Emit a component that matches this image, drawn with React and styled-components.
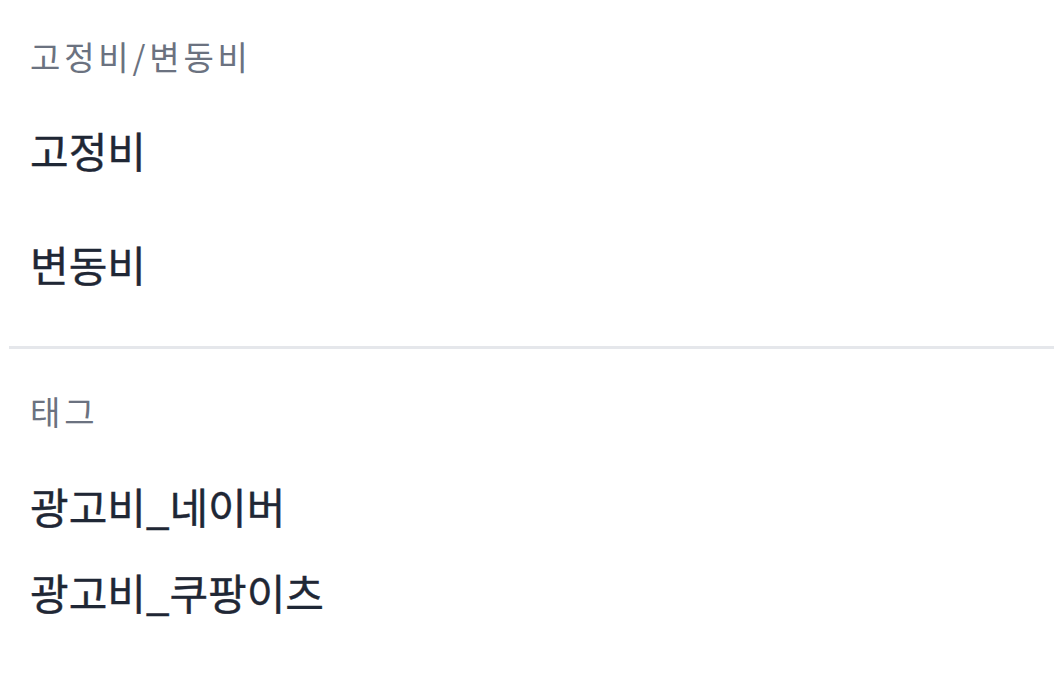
import React from 'react';
import styled, { createGlobalStyle } from 'styled-components';

const GlobalStyle = createGlobalStyle`
  html, body {
    margin: 0;
    padding: 0;
    background: #ffffff;
  }
  body {
    font-family: "Noto Sans CJK KR", "Noto Sans", sans-serif;
  }
`;

const Menu = styled.div`
  display: flex;
  flex-direction: column;
  width: 1062px;
  padding: 0 8px 0 9px;
  box-sizing: border-box;
`;

const Group = styled.div`
  display: flex;
  flex-direction: column;
`;

const Label = styled.div`
  display: flex;
  align-items: center;
  height: 60px;
  margin-top: ${(p) => p.$top || 0}px;
  padding: 0 21px;
  font-size: 33px;
  letter-spacing: 3.8px;
  color: #6b7280;
`;

const Item = styled.div`
  display: flex;
  align-items: center;
  height: 76px;
  margin-top: ${(p) => p.$top || 0}px;
  padding: 0 21px;
  font-size: 42px;
  font-weight: 400;
  color: #1f2735;
  -webkit-text-stroke: 0.4px #1f2735;
  cursor: default;
`;

const Divider = styled.div`
  height: 3px;
  margin-top: ${(p) => p.$top || 0}px;
  background: #e5e7eb;
`;

const App = () => {
  return (
    <>
      <GlobalStyle />
      <Menu>
        <Group>
          <Label $top={26}>고정비/변동비</Label>
          <Item $top={25}>고정비</Item>
          <Item $top={38}>변동비</Item>
        </Group>
        <Divider $top={45} />
        <Group>
          <Label $top={32}>태그</Label>
          <Item $top={26}>광고비_네이버</Item>
          <Item $top={10}>광고비_쿠팡이츠</Item>
        </Group>
      </Menu>
    </>
  );
};

export default App;
